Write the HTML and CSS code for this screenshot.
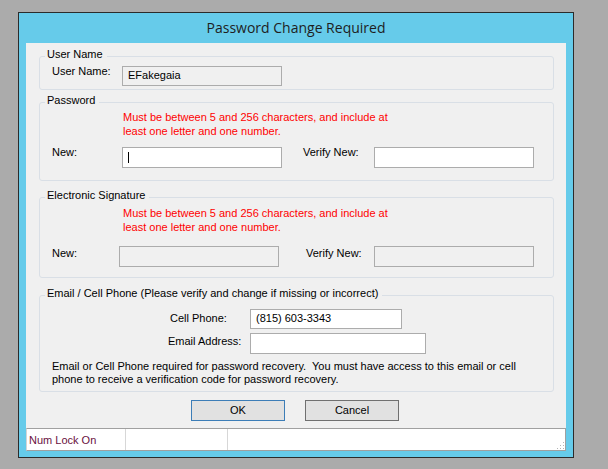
FILE: index.html
```html
<!DOCTYPE html>
<html lang="en">
<head>
<meta charset="utf-8">
<title>Password Change Required</title>
<link rel="stylesheet" href="styles.css">
</head>
<body>
<div class="window">
  <div class="titlebar">Password Change Required</div>
  <div class="client">
    <div class="group g-user">
      <div class="legend">User Name</div>
      <div class="row r-user">
        <span class="lbl l-user">User Name:</span>
        <span class="tb tb-ro w-user">EFakegaia</span>
      </div>
    </div>

    <div class="group g-pass">
      <div class="legend">Password</div>
      <div class="note n-pass">Must be between 5 and 256 characters, and include at<br>least one letter and one number.</div>
      <div class="row r-pass">
        <span class="lbl l-new">New:</span>
        <span class="tb w-pass"><span class="caret"></span></span>
        <span class="lbl l-verify">Verify New:</span>
        <span class="tb w-pass"></span>
      </div>
    </div>

    <div class="group g-sig">
      <div class="legend">Electronic Signature</div>
      <div class="note n-sig">Must be between 5 and 256 characters, and include at<br>least one letter and one number.</div>
      <div class="row r-sig">
        <span class="lbl l-new2">New:</span>
        <span class="tb tb-ro w-pass"></span>
        <span class="lbl l-verify2">Verify New:</span>
        <span class="tb tb-ro w-pass"></span>
      </div>
    </div>

    <div class="group g-mail">
      <div class="legend">Email / Cell Phone (Please verify and change if missing or incorrect)</div>
      <div class="row r-cell">
        <span class="lbl l-cell">Cell Phone:</span>
        <span class="tb w-cell">(815) 603-3343</span>
      </div>
      <div class="row r-email">
        <span class="lbl l-email">Email Address:</span>
        <span class="tb w-email"></span>
      </div>
      <p class="para">Email or Cell Phone required for password recovery.&nbsp; You must have access to this email or cell<br>phone to receive a verification code for password recovery.</p>
    </div>

    <div class="buttons">
      <button class="btn btn-default" type="button">OK</button>
      <button class="btn" type="button">Cancel</button>
    </div>

    <div class="statusbar">
      <div class="panel p1">Num Lock On</div>
      <div class="panel p2"></div>
      <div class="panel p3"></div>
      <svg class="grip" width="9" height="9" viewBox="0 0 9 9" aria-hidden="true">
        <rect x="7" y="1" width="1" height="1" fill="#b4b4b4"/>
        <rect x="4" y="4" width="1" height="1" fill="#b4b4b4"/>
        <rect x="7" y="4" width="1" height="1" fill="#b4b4b4"/>
        <rect x="1" y="7" width="1" height="1" fill="#b4b4b4"/>
        <rect x="4" y="7" width="1" height="1" fill="#b4b4b4"/>
        <rect x="7" y="7" width="1" height="1" fill="#b4b4b4"/>
      </svg>
    </div>
  </div>
</div>
</body>
</html>
```

FILE: styles.css
```css
* { box-sizing: border-box; }

html, body { margin: 0; }

body {
  background: #ababab;
  font-family: "Liberation Sans", Arial, sans-serif;
  font-size: 11px;
  line-height: 13px;
  color: #000;
  padding: 12px 0 0 18px;
  height: 469px;
  overflow: hidden;
}

.window {
  width: 556px;
  height: 446px;
  border: 1px solid #2b2b2b;
  background: #66cbea;
  padding: 0 7px 6px;
  display: flex;
  flex-direction: column;
}

.titlebar {
  flex: none;
  height: 30px;
  line-height: 30px;
  text-align: center;
  font-family: "Open Sans", "Liberation Sans", sans-serif;
  font-size: 14px;
  color: #1e1e1e;
}

.client {
  flex: 1;
  background: #f0f0f0;
  padding-top: 13px;
  display: flex;
  flex-direction: column;
}

.group {
  flex: none;
  margin: 0 12px 0 13px;
  border: 1px solid #d9dfe6;
  border-radius: 3px;
}
.g-user { height: 34px; }
.g-pass { height: 79px; margin-top: 12px; }
.g-sig  { height: 81px; margin-top: 16px; }
.g-mail { height: 97px; margin-top: 17px; }

.legend {
  width: max-content;
  margin: -9px 0 0 5px;
  padding: 0 4px 0 2px;
  background: #f0f0f0;
  line-height: 13px;
}

.note {
  color: #ff0000;
  line-height: 14px;
  margin-left: 83px;
}
.n-pass { margin-top: 3px; }
.n-sig  { margin-top: 4px; }

.row {
  display: flex;
  align-items: flex-start;
}
.lbl { flex: none; white-space: nowrap; }

.tb {
  flex: none;
  display: block;
  height: 20px;
  border: 1px solid #acacac;
  background: #fff;
  padding: 2px 0 0 5px;
  white-space: nowrap;
}
.tb-ro { background: #f0f0f0; }

.caret {
  display: block;
  width: 1px;
  height: 11px;
  margin-top: 2px;
  background: #000;
}

/* User name group */
.r-user { margin-top: 4px; }
.l-user { margin-left: 12px; width: 70px; }
.w-user { width: 160px; margin-top: 1px; }

/* Password group */
.r-pass { margin-top: 8px; }
.w-pass { width: 160px; height: 21px; }
.r-pass .w-pass { margin-top: 1px; }
.l-new { margin-left: 12px; width: 70px; }
.l-verify { margin-left: 21px; width: 71px; }

/* Signature group */
.r-sig { margin-top: 12px; }
.r-sig .lbl { margin-top: 1px; }
.l-new2 { margin-left: 12px; width: 67px; }
.l-verify2 { margin-left: 27px; width: 68px; }

/* Email group */
.r-cell { margin-top: 9px; }
.l-cell { margin-left: 130px; width: 80px; margin-top: 3px; }
.w-cell { width: 152px; height: 20px; padding-left: 5px; }
.r-email { margin-top: 4px; }
.l-email { margin-left: 128px; width: 82px; margin-top: 2px; }
.w-email { width: 176px; height: 21px; }

.para {
  margin: 6px 0 0 12px;
  line-height: 13px;
}

/* Buttons */
.buttons {
  flex: none;
  display: flex;
  gap: 20px;
  margin-top: 8px;
  padding-left: 165px;
}
.btn {
  width: 94px;
  height: 21px;
  margin: 0;
  padding: 0;
  border: 1px solid #707070;
  background: #e1e1e1;
  font-family: "Liberation Sans", Arial, sans-serif;
  font-size: 11px;
  line-height: 19px;
  color: #000;
  text-align: center;
}
.btn-default { border-color: #3c7db7; }

/* Status bar */
.statusbar {
  position: relative;
  flex: none;
  height: 23px;
  margin-top: 7px;
  background: #fff;
  border-top: 1px solid #a0a0a0;
  border-bottom: 1px solid #a0a0a0;
  border-right: 1px solid #a0a0a0;
  border-left: 1px solid #d4d4d4;
  display: flex;
}
.panel {
  flex: none;
  height: 21px;
  padding: 5px 0 0 2px;
  white-space: nowrap;
}
.p1 { width: 99px; border-right: 1px solid #d7d7d7; color: #6a1040; }
.p2 { width: 102px; border-right: 1px solid #d7d7d7; }
.p3 { flex: 1; }
.grip {
  position: absolute;
  right: 0;
  bottom: 0;
}
```
